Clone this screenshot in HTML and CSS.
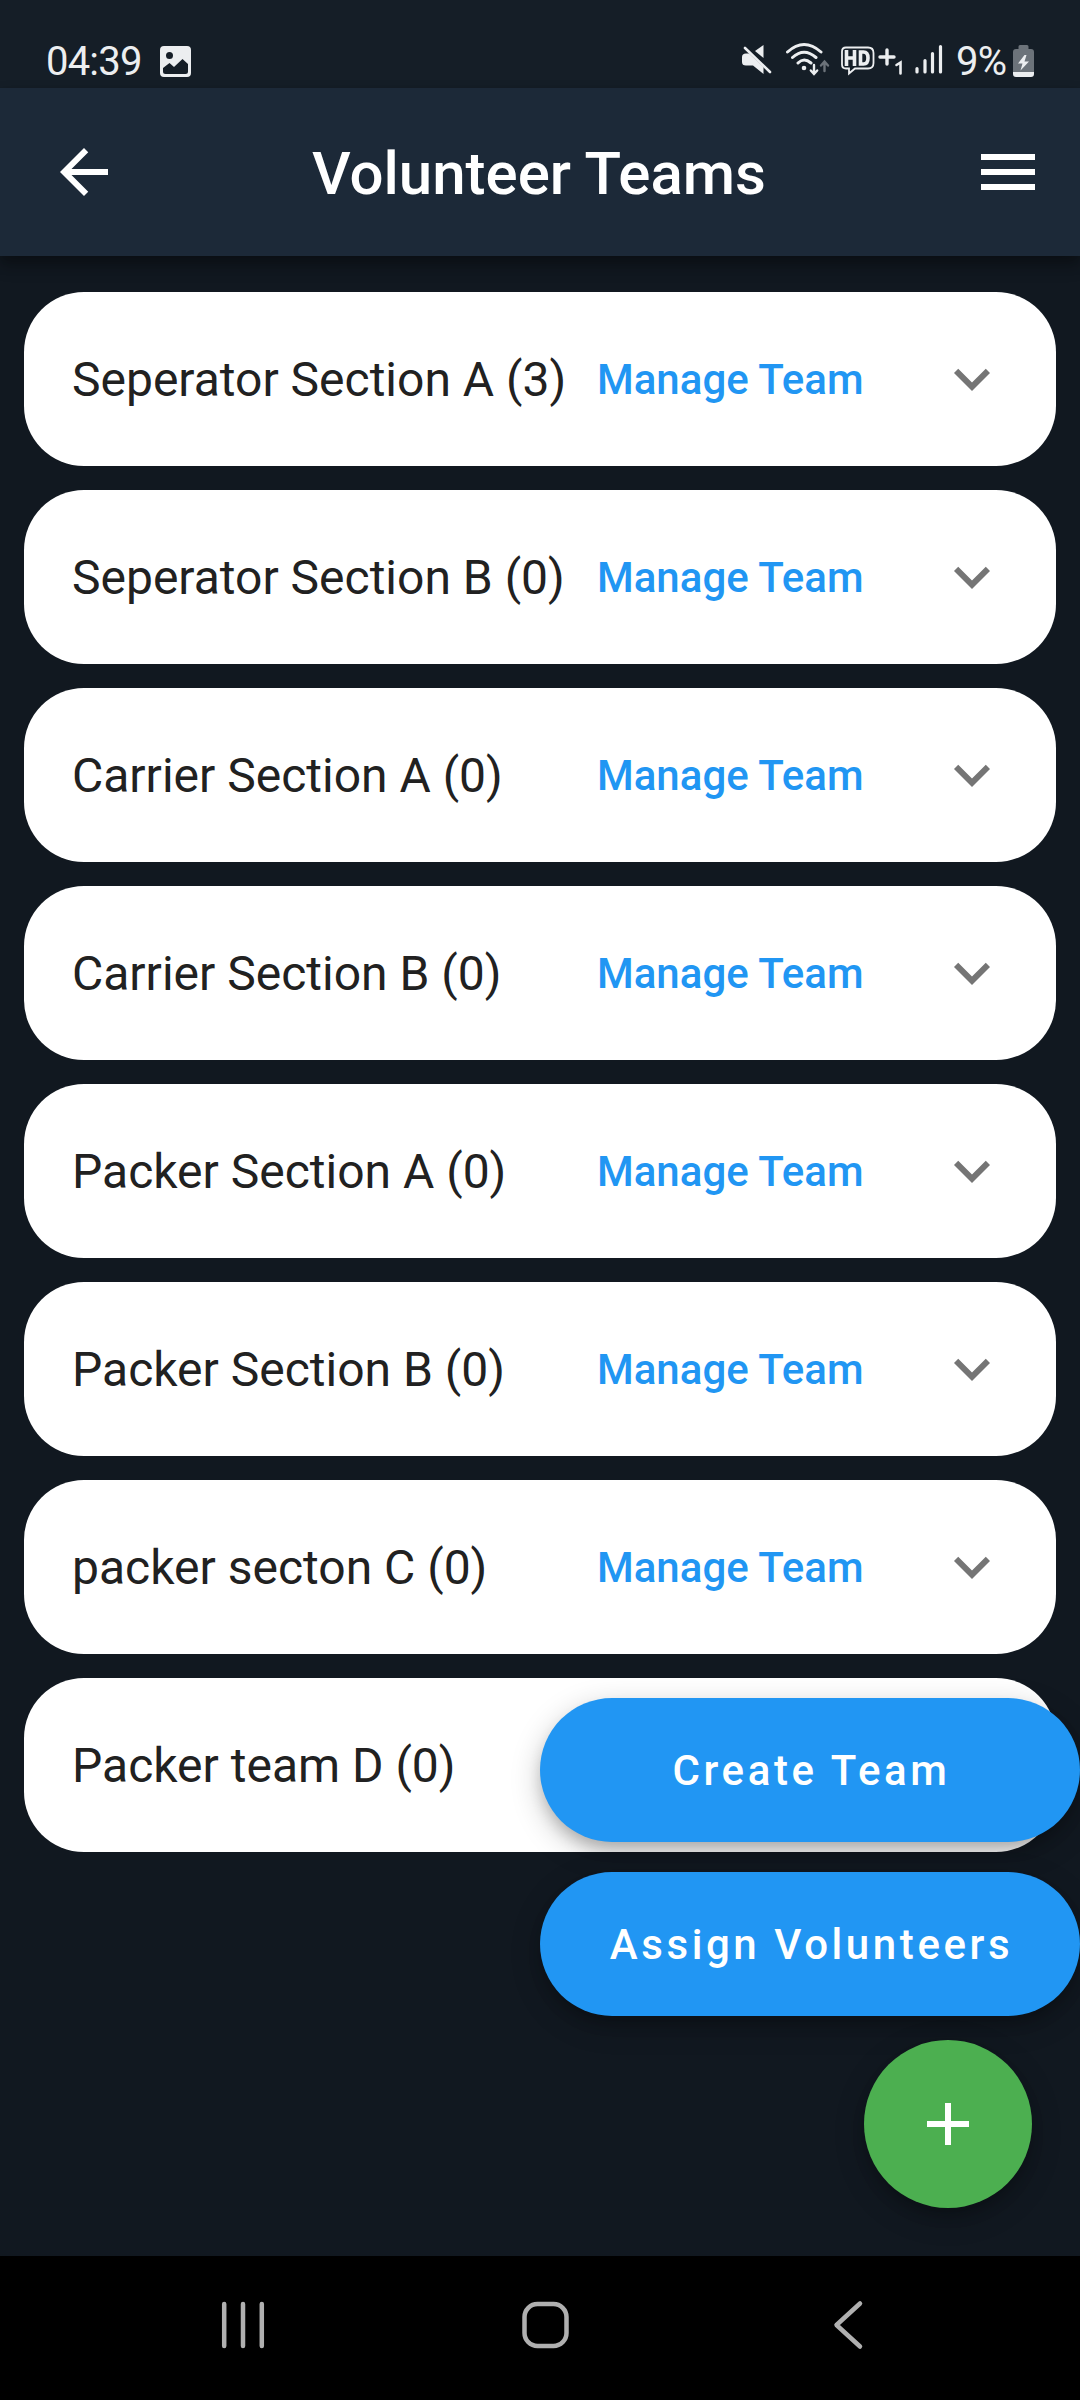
FILE: index.html
```html
<!DOCTYPE html>
<html lang="en">
<head>
<meta charset="utf-8">
<title>Volunteer Teams</title>
<link rel="stylesheet" href="styles.css">
</head>
<body>
<svg class="defs" aria-hidden="true">
  <symbol id="chevron" viewBox="0 0 24 24"><path d="M16.59 8.59L12 13.17 7.41 8.59 6 10l6 6 6-6z"/></symbol>
</svg>
<div class="screen">
  <header class="status-bar">
    <span class="clock">04:39</span>
    <svg class="status-photo" viewBox="0 0 31 31">
      <path fill-rule="evenodd" d="M4 0H27Q31 0 31 4V27Q31 31 27 31H4Q0 31 0 27V4Q0 0 4 0ZM9.500 6A3.500 3.500 0 1 0 9.500 13A3.500 3.500 0 1 0 9.500 6ZM3 22V25.500Q3 28 5.500 28H25.500Q28 28 28 25.500V18L22.500 13L14 21L9.500 17Z"/>
    </svg>
    <svg class="status-icons" viewBox="0 0 206 40" fill="none" stroke="#eceef0" stroke-linecap="round">
      <g stroke="none" fill="#eceef0">
        <path d="M0 18Q0 14.500 4 14.500H7L21.500 28V35L11 26.500H4Q0 26.500 0 23Z"/>
        <path d="M21.500 6V19L13 12Z"/>
      </g>
      <path d="M3 9L28 33" stroke-width="2.600"/>
      <path d="M45.500 13Q62 -2 79 13M50.500 18.500Q62 8 74 18.500M56 24Q62 18 69 24" stroke-width="3"/>
      <circle cx="62" cy="29" r="2.300" fill="#eceef0" stroke="none"/>
      <path d="M72 26V34.500M68.800 31.500L72 35L75.200 31.500" stroke-width="2.400"/>
      <path d="M82.500 32V23M79 26.500L82.500 22.500L86 26.500" stroke="#6c737a" stroke-width="2.400"/>
      <path d="M104 8.500H126Q131.500 8.500 131.500 14V24Q131.500 29.500 126 29.500H113L107 34.500V29.500H104Q100 29.500 100 25.500V12.500Q100 8.500 104 8.500Z" stroke-width="1.800"/>
      <path d="M104.500 11V27M112.500 11V27M104.500 19H112.500" stroke-width="3.600" stroke-linecap="butt"/>
      <path d="M118.500 13H121.500Q126 13 126 19T121.500 25H118.500Z" stroke-width="3.600" stroke-linejoin="miter"/>
      <path d="M138 18H152M145 11V25" stroke-width="3.400"/>
      <path d="M154.500 26L158.500 23.500V34.500" stroke-width="2.600"/>
      <path d="M175 29.500V33M183 21.500V33M190.500 14.500V33M198.500 7.500V33" stroke-width="3.200"/>
    </svg>
    <span class="battery-level">9%</span>
    <svg class="status-battery" viewBox="0 0 21 32">
      <path fill="#6c737a" d="M7 0H14Q15.500 0 15.500 1.500V4H18Q21 4 21 7V27H0V7Q0 4 3 4H5.500V1.500Q5.500 0 7 0Z"/>
      <path fill="#eceef0" d="M0 27H21V29Q21 32 18 32H3Q0 32 0 29ZM11.500 10L5 18.500H9.500L7.500 25.500L16 16.500H11.500L13.500 10Z"/>
    </svg>
  </header>

  <div class="app-bar">
    <svg class="icon" viewBox="0 0 24 24"><path d="M20 11H7.830l5.590-5.590L12 4l-8 8 8 8 1.410-1.410L7.830 13H20z"/></svg>
    <h1 class="title">Volunteer Teams</h1>
    <svg class="icon" viewBox="0 0 24 24"><path d="M3 18h18v-2H3zM3 13h18v-2H3zM3 6v2h18V6z"/></svg>
  </div>

  <main class="content">
    <ul class="teams">
      <li class="team"><span class="team-name">Seperator Section A (3)</span><span class="manage">Manage Team</span><svg class="chevron"><use href="#chevron"/></svg></li>
      <li class="team"><span class="team-name">Seperator Section B (0)</span><span class="manage">Manage Team</span><svg class="chevron"><use href="#chevron"/></svg></li>
      <li class="team"><span class="team-name">Carrier Section A (0)</span><span class="manage">Manage Team</span><svg class="chevron"><use href="#chevron"/></svg></li>
      <li class="team"><span class="team-name">Carrier Section B (0)</span><span class="manage">Manage Team</span><svg class="chevron"><use href="#chevron"/></svg></li>
      <li class="team"><span class="team-name">Packer Section A (0)</span><span class="manage">Manage Team</span><svg class="chevron"><use href="#chevron"/></svg></li>
      <li class="team"><span class="team-name">Packer Section B (0)</span><span class="manage">Manage Team</span><svg class="chevron"><use href="#chevron"/></svg></li>
      <li class="team"><span class="team-name">packer secton C (0)</span><span class="manage">Manage Team</span><svg class="chevron"><use href="#chevron"/></svg></li>
      <li class="team"><span class="team-name">Packer team D (0)</span></li>
    </ul>
    <div class="actions">
      <button class="action">Create Team</button>
      <button class="action">Assign Volunteers</button>
      <button class="fab" aria-label="Add"><svg class="icon" viewBox="0 0 24 24"><path d="M19 13h-6v6h-2v-6H5v-2h6V5h2v6h6z"/></svg></button>
    </div>
  </main>

  <nav class="nav-bar">
    <svg class="nav-icon" viewBox="0 0 60 60"><path d="M11.200 9V51M30 9V51M48.800 9V51"/></svg>
    <svg class="nav-icon" viewBox="0 0 60 60"><rect x="8.500" y="9" width="42" height="42" rx="13"/></svg>
    <svg class="nav-icon" viewBox="0 0 60 60"><path d="M42 8.500L18.500 30L42 51.500"/></svg>
  </nav>
</div>
</body>
</html>
```
FILE: styles.css
```css
* { box-sizing: border-box; }

body {
  margin: 0;
  font-family: Roboto, sans-serif;
}

.defs { display: none; }

.screen {
  display: flex;
  flex-direction: column;
  width: 1080px;
  height: 2400px;
  overflow: hidden;
  background: #111820;
}

.status-bar {
  display: flex;
  align-items: flex-start;
  height: 88px;
  padding: 38px 46px 0 46px;
  background: #151e27;
  color: #eceef0;
  font-size: 40px;
  line-height: 47px;
}

.clock {
  width: 114px;
  letter-spacing: -0.8px;
}

.status-photo {
  width: 31px;
  height: 31px;
  margin-top: 8px;
  fill: #eceef0;
}

.status-icons {
  width: 206px;
  height: 40px;
  margin: 1px 0 0 auto;
}

.battery-level {
  width: 65px;
  padding-left: 8px;
  letter-spacing: -0.8px;
}

.status-battery {
  width: 21px;
  height: 32px;
  margin-top: 7px;
}

.app-bar {
  position: relative;
  z-index: 1;
  display: flex;
  align-items: center;
  justify-content: space-between;
  height: 168px;
  padding: 0 36px 0 48px;
  background: #1c2938;
  box-shadow: 0 6px 12px rgba(0, 0, 0, 0.28), 0 12px 15px rgba(0, 0, 0, 0.14);
  color: #fff;
}

.icon {
  width: 72px;
  height: 72px;
  fill: #fff;
}

.title {
  margin: 0;
  padding: 3px 14px 0 0;
  font-size: 60px;
  font-weight: 500;
  line-height: 70px;
}

.content {
  position: relative;
  flex: 1;
  padding: 36px 24px;
}

.teams {
  display: flex;
  flex-direction: column;
  gap: 24px;
  margin: 0;
  padding: 0;
  list-style: none;
}

.team {
  display: flex;
  align-items: center;
  height: 174px;
  padding: 0 48px;
  border-radius: 60px;
  background: #fff;
}

.team-name {
  width: 525px;
  color: #212121;
  font-size: 48px;
  white-space: nowrap;
}

.manage {
  color: #2196f3;
  font-size: 42px;
  font-weight: 500;
  white-space: nowrap;
}

.chevron {
  width: 72px;
  height: 72px;
  margin-left: auto;
  fill: #757575;
}

/* Expanded speed dial, floating over the list */
.actions {
  position: absolute;
  right: 0;
  bottom: 48px;
  display: flex;
  flex-direction: column;
  align-items: flex-end;
}

.action,
.fab {
  display: flex;
  align-items: center;
  justify-content: center;
  padding: 0;
  border: 0;
  box-shadow: 0 9px 15px -3px rgba(0, 0, 0, 0.2), 0 9px 30px rgba(0, 0, 0, 0.22);
  color: #fff;
}

.action {
  width: 540px;
  height: 144px;
  margin-bottom: 30px;
  padding-left: 3px;
  border-radius: 72px;
  background: #2196f3;
  font-family: inherit;
  font-size: 42px;
  font-weight: 500;
  letter-spacing: 3.6px;
}

.fab {
  width: 168px;
  height: 168px;
  margin: -6px 48px 0 0;
  border-radius: 50%;
  background: #4caf50;
}

.nav-bar {
  display: flex;
  align-items: center;
  justify-content: space-between;
  height: 144px;
  padding: 0 202px 6px 213px;
  background: #000;
}

.nav-icon {
  width: 60px;
  height: 60px;
  fill: none;
  stroke: #b0b0b0;
  stroke-width: 4.500;
  stroke-linecap: round;
  stroke-linejoin: round;
}
```
